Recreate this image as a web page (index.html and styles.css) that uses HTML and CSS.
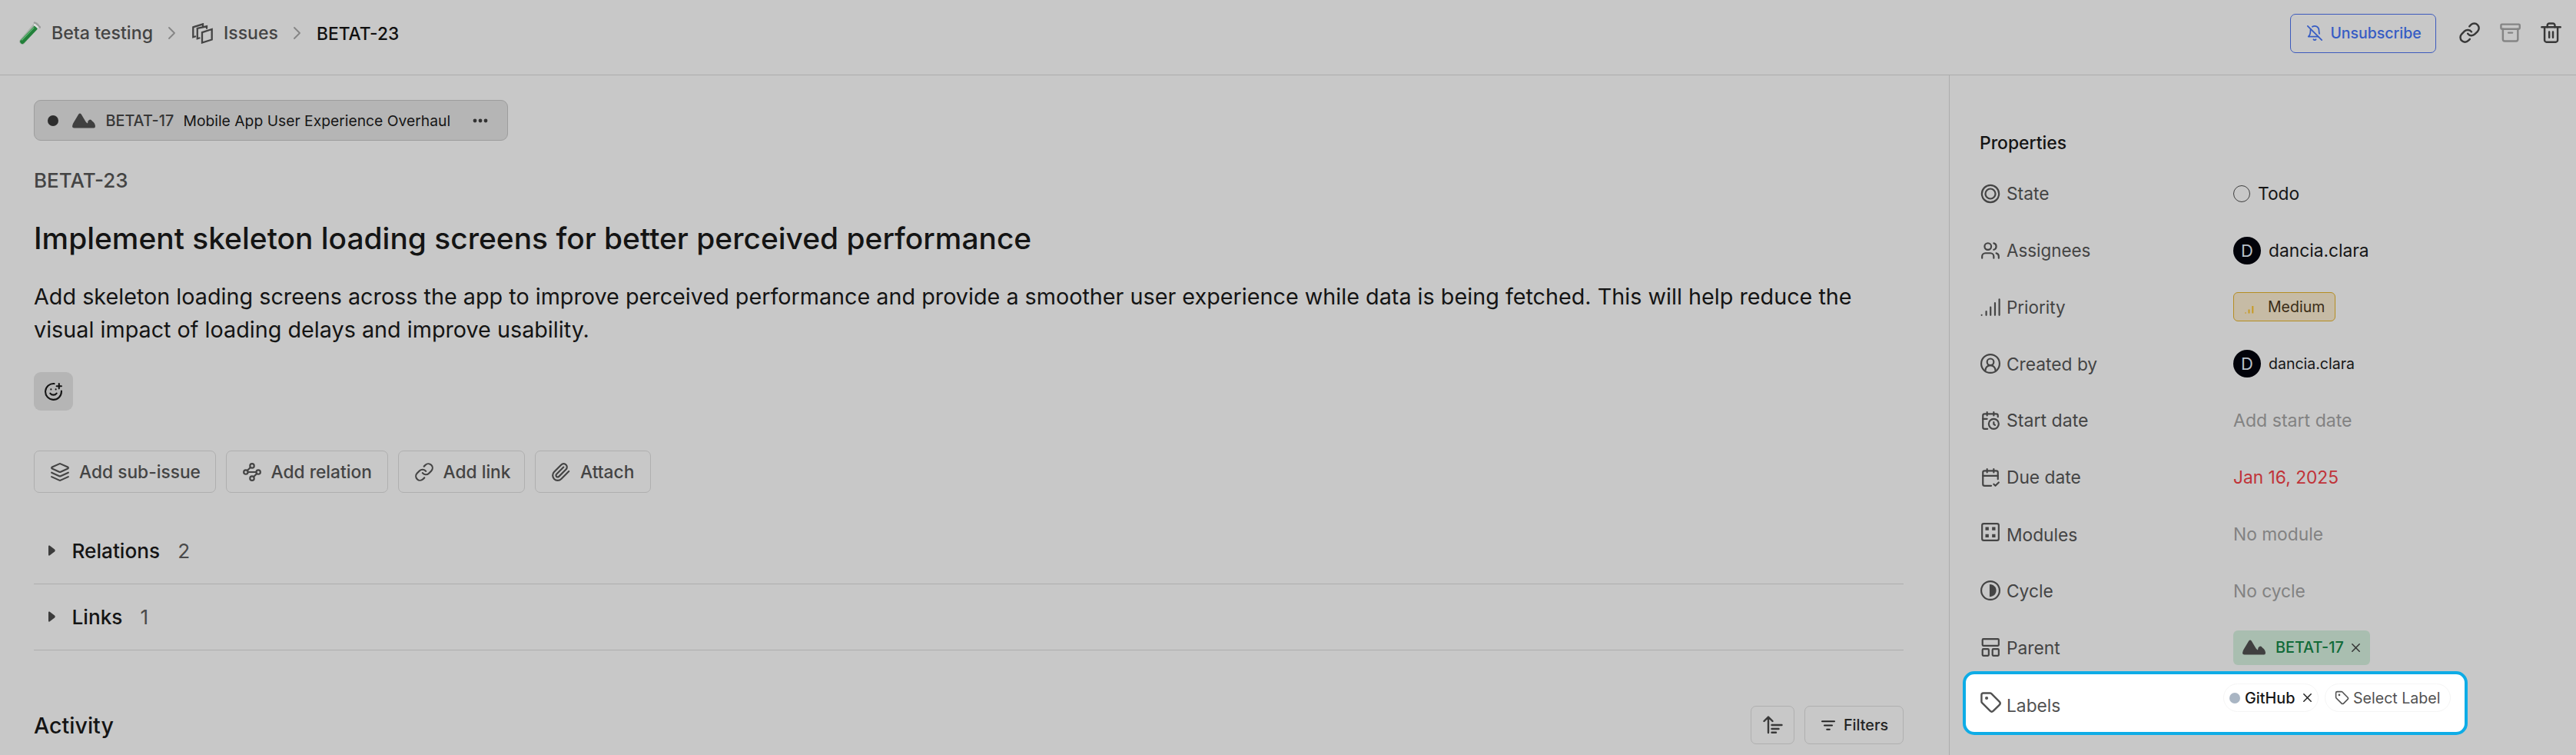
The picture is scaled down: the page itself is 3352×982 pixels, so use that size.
FILE: index.html
```
<!DOCTYPE html>
<html lang="en">
<head>
<meta charset="utf-8">
<title>BETAT-23</title>
<link rel="stylesheet" href="styles.css">
</head>
<body>
<svg class="defs" width="0" height="0">
  <symbol id="link" viewBox="0 0 24 24"><path d="M10 13a5 5 0 0 0 7.54.54l3-3a5 5 0 0 0-7.07-7.07l-1.72 1.71"/><path d="M14 11a5 5 0 0 0-7.54-.54l-3 3a5 5 0 0 0 7.07 7.07l1.71-1.71"/></symbol>
  <symbol id="tag" viewBox="0 0 24 24"><path d="M12.586 2.586A2 2 0 0 0 11.172 2H4a2 2 0 0 0-2 2v7.172a2 2 0 0 0 .586 1.414l8.704 8.704a2.426 2.426 0 0 0 3.42 0l6.58-6.58a2.426 2.426 0 0 0 0-3.42z"/><circle cx="7.5" cy="7.5" r=".7" fill="currentColor"/></symbol>
  <symbol id="mountain" viewBox="0 0 30 20"><path fill="currentColor" stroke="none" d="M2.500 19.500Q-.5 19.500 .2 16.500Q.3 14.500 2 12L8.300 1.500Q10 -.7 11.700 1.500L17.500 11.200Q19 13 20 13.500L20.500 10.500Q23.500 6.500 26 10.500Q29.500 12.500 30 17Q30 19.500 28 19.500Z"/></symbol>
  <symbol id="chevron" viewBox="0 0 9 16"><path d="M1 1l7 7-7 7"/></symbol>
  <symbol id="cross" viewBox="0 0 11 11"><path d="M.8.8l9.400 9.400M10.200.8L.8 10.200"/></symbol>
</svg>

<header class="header">
  <nav class="crumbs">
    <svg class="tube" viewBox="0 0 28 30"><path d="M22 5L4 26" stroke="#a9b3aa" stroke-width="7.500" stroke-linecap="round"/><path d="M20.500 9L4.200 26" stroke="#22803a" stroke-width="6" stroke-linecap="round"/><path d="M19 8L3.500 24" stroke="#5fb572" stroke-width="1.300" stroke-linecap="round"/><path d="M20 1.500l7 6" stroke="#9c9c9c" stroke-width="2.500" stroke-linecap="round"/><path d="M20 4l4 3.500" stroke="#dedede" stroke-width="2.500"/></svg>
    <span class="crumb-project">Beta testing</span>
    <svg class="chevron"><use href="#chevron"/></svg>
    <svg class="stack" viewBox="0 0 27 27"><path d="M4 17.500l-2.700.7V5.300L14 1.300v3"/><path d="M9.500 19.500l-2.700.700V7L19 4.300v2.500"/><path d="M13 12.200l12.700-4.200v13.500L13 25.500z"/></svg>
    <span class="crumb-issues">Issues</span>
    <svg class="chevron"><use href="#chevron"/></svg>
    <span class="crumb-current">BETAT-23</span>
  </nav>
  <div class="actions">
    <button class="unsubscribe"><svg class="icon bell" viewBox="0 0 24 24"><path d="M8.700 3A6 6 0 0 1 18 8a21.300 21.300 0 0 0 .6 5"/><path d="M17 17H3s3-2 3-9a4.670 4.670 0 0 1 .3-1.700"/><path d="M10.300 21a1.940 1.940 0 0 0 3.400 0"/><path d="m2 2 20 20"/></svg>Unsubscribe</button>
    <svg class="icon tool"><use href="#link"/></svg>
    <svg class="icon tool muted" viewBox="0 0 24 24"><rect x="2" y="3" width="20" height="5" rx="1"/><path d="M4 8v11a2 2 0 0 0 2 2h12a2 2 0 0 0 2-2V8"/><path d="M10 12h4"/></svg>
    <svg class="icon tool" viewBox="0 0 24 24"><path d="M2 6h20"/><path d="M19 6v14c0 1-1 2-2 2H7c-1 0-2-1-2-2V6"/><path d="M8 6V4c0-1 1-2 2-2h4c1 0 2 1 2 2v2"/><path d="M10 11v6M14 11v6"/></svg>
  </div>
</header>

<div class="body">
  <main class="main">
    <div class="parent-chip">
      <span class="state-dot"></span>
      <svg class="mountain"><use href="#mountain"/></svg>
      <span class="parent-id">BETAT-17</span>
      <span class="parent-name">Mobile App User Experience Overhaul</span>
      <svg class="more" viewBox="0 0 20 6"><circle cx="3" cy="3" r="2.400"/><circle cx="10" cy="3" r="2.400"/><circle cx="17" cy="3" r="2.400"/></svg>
    </div>
    <div class="issue-id">BETAT-23</div>
    <h1 class="title">Implement skeleton loading screens for better perceived performance</h1>
    <p class="desc">Add skeleton loading screens across the app to improve perceived performance and provide a smoother user experience while data is being fetched. This will help reduce the<br>visual impact of loading delays and improve usability.</p>
    <button class="react"><svg class="icon smile" viewBox="0 0 24 24"><path d="M22 11v1a10 10 0 1 1-9-10"/><path d="M8 14s1.500 2 4 2 4-2 4-2"/><path d="M9 9h.01M15 9h.01"/><path d="M16 5h6M19 2v6"/></svg></button>
    <div class="add-row">
      <button class="add add-sub"><svg class="icon" viewBox="0 0 24 24"><path d="m12.830 2.180a2 2 0 0 0-1.660 0L2.600 6.080a1 1 0 0 0 0 1.830l8.580 3.910a2 2 0 0 0 1.660 0l8.580-3.900a1 1 0 0 0 0-1.830Z"/><path d="m22 17.650-9.170 4.160a2 2 0 0 1-1.660 0L2 17.650"/><path d="m22 12.650-9.170 4.160a2 2 0 0 1-1.660 0L2 12.650"/></svg>Add sub-issue</button>
      <button class="add add-relation"><svg class="icon" viewBox="0 0 24 24"><circle cx="12" cy="4.500" r="2.500"/><path d="m10.200 6.300-3.900 3.900"/><circle cx="4.500" cy="12" r="2.500"/><path d="M7 12h10"/><circle cx="19.500" cy="12" r="2.500"/><path d="m13.800 17.700 3.900-3.900"/><circle cx="12" cy="19.500" r="2.500"/></svg>Add relation</button>
      <button class="add add-link"><svg class="icon"><use href="#link"/></svg>Add link</button>
      <button class="add add-attach"><svg class="icon" viewBox="0 0 24 24"><path d="m21.440 11.050-9.190 9.190a6 6 0 0 1-8.490-8.490l8.570-8.570A4 4 0 1 1 18 8.840l-8.590 8.570a2 2 0 0 1-2.830-2.830l8.490-8.480"/></svg>Attach</button>
    </div>
    <section class="fold"><svg class="tri" viewBox="0 0 9 14"><path d="M0 1.500Q0 0 1.500 .5L8 5.500Q9.500 7 8 8.500L1.500 13.500Q0 14 0 12.500Z"/></svg><span class="fold-name">Relations</span><span class="count">2</span></section>
    <section class="fold"><svg class="tri" viewBox="0 0 9 14"><path d="M0 1.500Q0 0 1.500 .5L8 5.500Q9.500 7 8 8.500L1.500 13.500Q0 14 0 12.500Z"/></svg><span class="fold-name">Links</span><span class="count">1</span></section>
    <div class="activity">
      <h2 class="activity-title">Activity</h2>
      <div class="activity-tools">
        <button class="sort"><svg viewBox="0 0 26 24"><path d="M7 22V2M1.500 7L7 1.500 12.500 7M11.500 12H24.500M11.500 17H20.500M11.500 21.800H17"/></svg></button>
        <button class="filters"><svg class="filter-icon" viewBox="0 0 18 13"><path d="M1 1.200h16M4 6.500h10M7.200 11.800h3.600"/></svg>Filters</button>
      </div>
    </div>
  </main>

  <aside class="side">
    <h2 class="side-title">Properties</h2>
    <dl class="props">
      <div class="prop"><dt><svg class="icon" viewBox="0 0 24 24"><circle cx="12" cy="12" r="10.300"/><circle cx="12" cy="12" r="6"/></svg>State</dt><dd class="dark todo"><span class="ring"></span>Todo</dd></div>
      <div class="prop"><dt class="snug"><svg class="icon" viewBox="0 0 24 24"><path d="M16 21v-2a4 4 0 0 0-4-4H6a4 4 0 0 0-4 4v2"/><circle cx="9" cy="7" r="4"/><path d="M22 21v-2a4 4 0 0 0-3-3.870"/><path d="M16 3.130a4 4 0 0 1 0 7.750"/></svg>Assignees</dt><dd class="dark user"><span class="avatar">D</span>dancia.clara</dd></div>
      <div class="prop"><dt class="snug"><svg class="icon" viewBox="0 0 24 24"><path d="M1.500 22h.01M7 22v-4.500M12.200 22v-9.500M17.500 22V7.500M22.700 22V3"/></svg>Priority</dt><dd><span class="medium"><svg class="bars" viewBox="0 0 12 11"><path d="M1 9.500v1M5.500 5.500v5M10.300 1v9.500"/></svg>Medium</span></dd></div>
      <div class="prop"><dt><svg class="icon" viewBox="0 0 24 24"><path d="M18 20a6 6 0 0 0-12 0"/><circle cx="12" cy="10" r="4"/><circle cx="12" cy="12" r="11"/></svg>Created by</dt><dd class="dark user small"><span class="avatar">D</span>dancia.clara</dd></div>
      <div class="prop"><dt class="loose"><svg class="icon tall" viewBox="0 0 24 24"><path d="M21 7.500V6a2 2 0 0 0-2-2H5a2 2 0 0 0-2 2v14a2 2 0 0 0 2 2h3.500"/><path d="M16 2v4M8 2v4M3 10h5M17.500 17.500 16 16.300V14"/><circle cx="16" cy="16" r="6"/></svg>Start date</dt><dd class="none loose">Add start date</dd></div>
      <div class="prop"><dt><svg class="icon tall" viewBox="0 0 24 24"><path d="M8 2v4M16 2v4"/><path d="M21 14V6a2 2 0 0 0-2-2H5a2 2 0 0 0-2 2v14a2 2 0 0 0 2 2h8"/><path d="M3 10h18M16 20l2 2 4-4"/></svg>Due date</dt><dd class="overdue">Jan 16, 2025</dd></div>
      <div class="prop"><dt><svg class="icon module" viewBox="0 0 24 24"><rect x="2" y="2" width="20" height="20" rx="2"/><path class="squares" d="M6 6h4v4H6zM14 6h4v4h-4zM6 14.500h4v4H6zM14 14.500h4v4h-4z"/></svg><span class="module-name">Modules</span></dt><dd class="none">No module</dd></div>
      <div class="prop"><dt><svg class="icon" viewBox="0 0 24 24"><circle cx="12" cy="12" r="11"/><path fill="currentColor" stroke="none" d="M11 4.500c4.500 0 8 3 8 7.500s-3.500 7.500-8 7.500z"/></svg>Cycle</dt><dd class="none">No cycle</dd></div>
      <div class="prop"><dt><svg class="icon tall" viewBox="0 0 24 24"><rect x="2.500" y="2" width="19.500" height="8" rx="1"/><rect x="2.500" y="14" width="7.500" height="8" rx="1"/><rect x="14.500" y="14" width="7.500" height="8" rx="1"/></svg>Parent</dt><dd><span class="parent-tag"><svg class="mountain"><use href="#mountain"/></svg><span>BETAT-17</span><svg class="cross"><use href="#cross"/></svg></span></dd></div>
      <div class="prop labels"><dt><svg class="icon label-icon"><use href="#tag"/></svg><span>Labels</span></dt>
        <dd class="label-list">
          <span class="pill github"><span class="label-dot"></span>GitHub<svg class="cross"><use href="#cross"/></svg></span>
          <span class="pill select"><svg class="icon tag-small"><use href="#tag"/></svg>Select Label</span>
        </dd></div>
    </dl>
  </aside>
</div>
</body>
</html>
```
FILE: styles.css
```
* { box-sizing: border-box; }
body, h1, h2, p, dl, dd { margin: 0; font-weight: inherit; }
body {
  width: 3352px; height: 982px; overflow: hidden;
  display: flex; flex-direction: column;
  background: #c8c8c8; color: #141414;
  font: 400 22.75px Inter, sans-serif;
}
svg { display: block; flex: none; fill: none; stroke: currentColor; stroke-linecap: round; stroke-linejoin: round; }
.defs { position: absolute; }
button { margin: 0; padding: 0; background: none; border: 1px solid #afafaf; border-radius: 7px; font: inherit; color: inherit; display: flex; align-items: center; }
.icon { width: 26px; height: 26px; stroke-width: 2; }

/* Header */
.header { flex: none; height: 98px; padding: 0 18px 11px 25px; border-bottom: 1px solid #adadad; display: flex; justify-content: space-between; align-items: center; }
.crumbs { display: flex; align-items: center; font-weight: 450; color: #444; }
.tube { width: 28px; height: 30px; }
.crumb-project { margin-left: 14px; width: 133px; font-size: 23.2px; }
.chevron { width: 9px; height: 16px; stroke: #858585; stroke-width: 1.8; margin: 0 22px 0 19px; }
.stack { width: 27px; height: 27px; stroke-width: 2.3; stroke-linejoin: miter; }
.crumb-issues { margin-left: 14px; width: 72px; font-size: 23px; }
.crumb-current { color: #101010; margin-left: -1px; font-weight: 500; }
.actions { display: flex; align-items: center; gap: 23.7px; color: #383838; }
.unsubscribe { width: 190px; height: 51px; border: 1.5px solid #3c5abd; padding-left: 20px; gap: 9px; font-size: 19.5px; font-weight: 500; color: #365cc4; margin-right: 5px; }
.bell { width: 22px; height: 22px; stroke-width: 1.9; }
.tool { width: 29.2px; height: 29.2px; }
.muted { color: #858585; }

.body { flex: 1; display: flex; min-height: 0; }

/* Main column */
.main { width: 2536px; padding: 32px 59px 0 44px; }
.parent-chip { width: 617px; height: 53px; border: 1px solid #9d9d9d; border-radius: 9px; background: #b5b5b5; display: flex; align-items: center; padding-left: 17px; font-size: 19.3px; }
.state-dot { width: 14px; height: 14px; border-radius: 50%; background: #2d2d2d; }
.mountain { width: 30px; height: 20px; color: #404040; }
.parent-chip .mountain { margin-left: 18px; }
.parent-id { margin-left: 13.5px; width: 101px; font-weight: 450; font-size: 19.8px; color: #373737; }
.parent-name { width: 376px; color: #161616; }
.more { width: 20px; height: 6px; fill: #333; stroke: none; }
.issue-id { margin-top: 36px; line-height: 32px; font-size: 26px; font-weight: 450; color: #444; }
.title { margin-top: 35px; line-height: 48px; font-size: 38.92px; font-weight: 500; white-space: nowrap; }
.desc { margin-top: 30px; line-height: 43px; font-size: 28.75px; white-space: nowrap; }
.react { margin-top: 34px; width: 51px; height: 50px; border: 0; border-radius: 9px; background: #b5b5b5; padding-left: 13px; }
.smile { width: 25px; height: 25px; }
.add-row { margin-top: 52px; display: flex; }
.add { height: 55px; padding-left: 20px; gap: 12px; font-weight: 500; color: #444; }
.add-sub { width: 237px; margin-right: 12.5px; }
.add-relation { width: 211px; margin-right: 13px; }
.add-link { width: 165.5px; margin-right: 13px; }
.add-attach { width: 151px; }
.fold { height: 86px; border-bottom: 1px solid #adadad; display: flex; align-items: center; padding: 0 0 1px 19px; font-size: 26.2px; }
.add-row + .fold { margin-top: 33px; }
.tri { width: 9px; height: 14px; fill: #3c3c3c; stroke: none; }
.fold-name { margin-left: 21.5px; font-weight: 500; }
.count { margin-left: 23px; color: #4a4a4a; }
.activity { margin-top: 72px; display: flex; justify-content: space-between; align-items: center; }
.activity-title { font-size: 28.6px; font-weight: 500; }
.activity-tools { display: flex; gap: 13px; }
.sort { width: 57px; height: 50px; padding-left: 14.5px; color: #3a3a3a; }
.sort svg { width: 26px; height: 24px; stroke-width: 2.4; }
.filters { width: 129px; height: 50px; padding-left: 21px; gap: 11px; font-size: 19.7px; font-weight: 500; color: #242424; }
.filter-icon { width: 18px; height: 13px; stroke-width: 2; }

/* Properties */
.side { flex: 1; border-left: 1px solid #adadad; padding: 72px 0 0 40px; }
.side-title { margin-left: -1px; line-height: 32px; font-size: 22.9px; font-weight: 500; }
.props { margin-top: 13px; }
.prop { height: 73.8px; display: grid; grid-template-columns: 329px auto; align-items: center; }
.prop dt { display: flex; align-items: center; gap: 8px; color: #444; }
.prop dd { display: flex; align-items: center; }
.snug { font-size: 22.4px; }
.loose { font-size: 23.1px; }
.dark { color: #161616; }
.todo { gap: 10px; }
.ring { width: 22px; height: 22px; border: 1.6px solid #3f3f3f; border-radius: 50%; }
.user { gap: 10px; }
.small { font-size: 19.5px; }
.avatar { width: 36px; height: 36px; border-radius: 50%; background: #02030a; color: #b9c0c8; font-size: 22px; display: flex; align-items: center; justify-content: center; }
.medium { width: 133px; height: 38px; border: 1.5px solid #b58d22; border-radius: 6px; background: #c6bba5; color: #3a2c16; font-size: 19.5px; font-weight: 425; display: flex; align-items: center; padding-left: 14px; gap: 18px; }
.bars { width: 12px; height: 11px; stroke: #c79a22; stroke-width: 2; stroke-linecap: butt; margin-top: 6px; }
.tall { height: 28px; }
.none { color: #828282; }
.overdue { color: #c03338; }
.squares { fill: currentColor; stroke: none; }
.module { margin-top: -5px; }
.module-name { margin-top: 2px; }
.parent-tag { width: 178px; height: 45px; border-radius: 6px; background: #a9beb0; color: #116a38; font-size: 19.8px; font-weight: 450; display: flex; align-items: center; padding-left: 12px; }
.parent-tag span { margin-left: 13px; width: 99px; }
.cross { width: 11px; height: 11px; color: #333; stroke-width: 1.5; }

/* Highlighted labels row */
.labels { margin: -6px 0 0 -23px; width: 657px; height: 83px; border: 4.5px solid #0eace6; border-radius: 15px; background: #fff; padding-left: 18px; align-items: start; grid-template-columns: 317px auto; }
.prop.labels dt { color: #525252; height: 76px; }
.label-icon { width: 29px; height: 29px; margin-right: -2px; margin-top: -3px; }
.labels dt span { margin-top: 4px; }
.label-list { padding-top: 12px; gap: 8px; }
.pill { height: 37px; border: 1px solid #f5f5f5; border-radius: 19px; display: flex; align-items: center; font-size: 19.6px; }
.github { width: 124px; padding-left: 7px; color: #161616; font-weight: 450; font-size: 19.8px; }
.label-dot { width: 14px; height: 14px; border-radius: 50%; background: #a9b5c3; margin-right: 6px; }
.github .cross { margin-left: 11px; color: #222; }
.select { width: 164px; padding-left: 12px; gap: 5px; color: #525252; }
.tag-small { width: 19px; height: 19px; }
```
